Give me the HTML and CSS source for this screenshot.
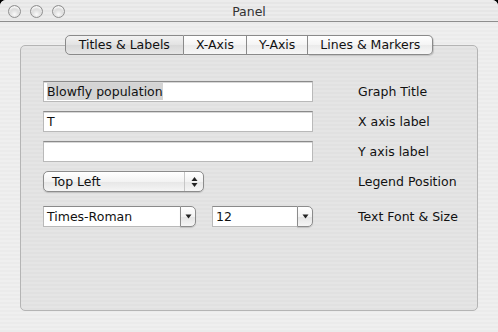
FILE: index.html
```html
<!DOCTYPE html>
<html lang="en">
<head>
  <meta charset="UTF-8" />
  <title>Panel</title>
  <link rel="stylesheet" href="styles.css">
</head>
<body>
  <div class="window">
    <div class="titlebar">
      <div class="lights">
        <span class="light"></span>
        <span class="light"></span>
        <span class="light"></span>
      </div>
      <div class="title">Panel</div>
      <div></div>
    </div>
    <div class="content">
      <div class="tabs">
        <div class="tab selected">Titles &amp; Labels</div>
        <div class="tab">X-Axis</div>
        <div class="tab">Y-Axis</div>
        <div class="tab">Lines &amp; Markers</div>
      </div>
      <div class="tabbox">
        <div class="form">
          <div class="field"><span class="sel">Blowfly population</span></div>
          <div class="label">Graph Title</div>

          <div class="field">T</div>
          <div class="label">X axis label</div>

          <div class="field"></div>
          <div class="label">Y axis label</div>

          <div class="popup">
            <span class="popup-text">Top Left</span>
            <span class="stepper">
              <svg width="7" height="12" viewBox="0 0 7 12"><path d="M3.5 1 L6.5 5 L0.5 5 Z M3.5 11 L6.5 7 L0.5 7 Z" fill="#222"/></svg>
            </span>
          </div>
          <div class="label">Legend Position</div>

          <div class="combos">
            <div class="combo font">
              <div class="combo-field">Times-Roman</div>
              <div class="combo-btn"><svg width="7" height="5" viewBox="0 0 7 5"><path d="M0.5 0.5 L6.5 0.5 L3.5 4.5 Z" fill="#222"/></svg></div>
            </div>
            <div class="combo size">
              <div class="combo-field">12</div>
              <div class="combo-btn"><svg width="7" height="5" viewBox="0 0 7 5"><path d="M0.5 0.5 L6.5 0.5 L3.5 4.5 Z" fill="#222"/></svg></div>
            </div>
          </div>
          <div class="label combo-label">Text Font &amp; Size</div>
        </div>
      </div>
    </div>
  </div>
</body>
</html>
```

FILE: styles.css
```css
body {
  margin: 0;
  background: #000;
  font-family: "DejaVu Sans", sans-serif;
  font-size: 12.5px;
  color: #111;
}
.window {
  width: 498px;
  height: 332px;
  border-radius: 6px 6px 0 0;
  overflow: hidden;
  background: repeating-linear-gradient(#efefef 0, #efefef 2px, #ebebeb 2px, #ebebeb 4px);
}
.titlebar {
  height: 21px;
  border-bottom: 1px solid #8e8e8e;
  display: grid;
  grid-template-columns: 1fr auto 1fr;
  align-items: center;
  background: repeating-linear-gradient(#ececec 0, #ececec 2px, #e6e6e6 2px, #e6e6e6 4px);
}
.lights {
  display: flex;
  gap: 9px;
  padding-left: 8px;
  padding-top: 1px;
}
.light {
  width: 11px;
  height: 11px;
  border-radius: 50%;
  border: 1px solid #8f8f8f;
  background: radial-gradient(circle at 50% 75%, #fafafa 0, #d6d6d6 55%, #a9a9a9 100%);
  box-shadow: inset 0 2px 2px rgba(255,255,255,0.9);
}
.title {
  color: #333;
  font-size: 12.5px;
  padding-top: 1px;
}
.content {
  padding-top: 13px;
}
.tabs {
  display: flex;
  justify-content: center;
  position: relative;
  z-index: 1;
  margin-bottom: -10px;
}
.tab {
  height: 18px;
  line-height: 18px;
  padding: 0 12px;
  border: 1px solid #8a8a8a;
  border-left: none;
  background: linear-gradient(#ffffff, #f4f4f4 50%, #ebebeb 51%, #f7f7f7);
  color: #111;
}
.tab:first-child {
  border-left: 1px solid #8a8a8a;
  border-radius: 5px 0 0 5px;
}
.tab:last-child {
  border-radius: 0 5px 5px 0;
  box-shadow: 1px 1px 1px rgba(0,0,0,0.15);
}
.tab.selected {
  background: linear-gradient(#f2f2f2, #e2e2e2 50%, #d8d8d8 51%, #e6e6e6);
  padding: 0 13px 0 13px;
}
.tabbox {
  margin: 0 20px;
  height: 264px;
  border: 1px solid #b4b4b4;
  border-radius: 5px;
  background: repeating-linear-gradient(#e5e5e5 0, #e5e5e5 2px, #e1e1e1 2px, #e1e1e1 4px);
  padding: 35px 0 0 22px;
  box-sizing: border-box;
  height: 266px;
}
.form {
  display: grid;
  grid-template-columns: 270px 1fr;
  column-gap: 45px;
  row-gap: 9px;
}
.label {
  align-self: center;
  color: #111;
}
.field {
  height: 21px;
  box-sizing: border-box;
  border: 1px solid #b9b9b9;
  border-top-color: #8a8a8a;
  background: #fff;
  box-shadow: inset 0 1px 0 #d8d8d8;
  padding: 0 3px;
  line-height: 19px;
  white-space: nowrap;
}
.sel {
  background: #d4d4d4;
  padding: 1px 0;
}
.popup {
  width: 161px;
  height: 21px;
  box-sizing: border-box;
  border: 1px solid #8c8c8c;
  border-radius: 5px;
  background: linear-gradient(#ffffff, #f3f3f3 50%, #e6e6e6 51%, #f5f5f5);
  box-shadow: 0 1px 1px rgba(0,0,0,0.15);
  display: flex;
  align-items: center;
  justify-content: space-between;
}
.popup-text {
  padding-left: 8px;
}
.stepper {
  width: 18px;
  height: 19px;
  border-left: 1px solid #c6c6c6;
  display: flex;
  align-items: center;
  justify-content: center;
}
.combos {
  display: flex;
  gap: 16px;
  margin-top: 5px;
}
.combo-label {
  margin-top: 5px;
}
.combo {
  display: flex;
  height: 21px;
}
.combo.font .combo-field {
  width: 137px;
}
.combo.size .combo-field {
  width: 85px;
}
.combo-field {
  box-sizing: border-box;
  height: 21px;
  border: 1px solid #b9b9b9;
  border-top-color: #8a8a8a;
  border-right: none;
  background: #fff;
  padding: 0 3px;
  line-height: 19px;
}
.combo-btn {
  width: 16px;
  height: 21px;
  box-sizing: border-box;
  border: 1px solid #8c8c8c;
  border-radius: 0 5px 5px 0;
  background: linear-gradient(#ffffff, #f3f3f3 50%, #e4e4e4 51%, #f5f5f5);
  box-shadow: 0 1px 1px rgba(0,0,0,0.15);
  display: flex;
  align-items: center;
  justify-content: center;
}
```
